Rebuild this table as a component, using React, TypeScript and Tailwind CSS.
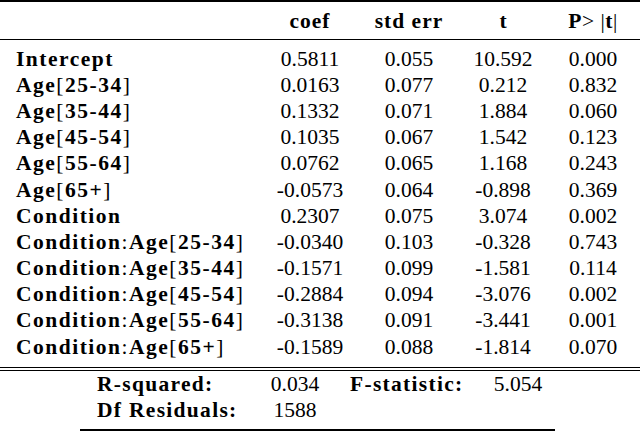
const rows: [string, string | null, string, string, string, string][] = [
  ["Intercept", null, "0.5811", "0.055", "10.592", "0.000"],
  ["Age", "25-34", "0.0163", "0.077", "0.212", "0.832"],
  ["Age", "35-44", "0.1332", "0.071", "1.884", "0.060"],
  ["Age", "45-54", "0.1035", "0.067", "1.542", "0.123"],
  ["Age", "55-64", "0.0762", "0.065", "1.168", "0.243"],
  ["Age", "65+", "-0.0573", "0.064", "-0.898", "0.369"],
  ["Condition", null, "0.2307", "0.075", "3.074", "0.002"],
  ["Condition:Age", "25-34", "-0.0340", "0.103", "-0.328", "0.743"],
  ["Condition:Age", "35-44", "-0.1571", "0.099", "-1.581", "0.114"],
  ["Condition:Age", "45-54", "-0.2884", "0.094", "-3.076", "0.002"],
  ["Condition:Age", "55-64", "-0.3138", "0.091", "-3.441", "0.001"],
  ["Condition:Age", "65+", "-0.1589", "0.088", "-1.814", "0.070"],
];

const cols = "grid grid-cols-[262px_96px_102px_86px_94px]";

function Label({ base, range }: { base: string; range: string | null }) {
  const parts = base.split(":");
  return (
    <span className="tracking-[1.5px]">
      {parts.map((p, i) => (
        <span key={i}>
          {i > 0 && <span className="font-normal">:</span>}
          <span className="font-bold">{p}</span>
        </span>
      ))}
      {range && (
        <>
          <span className="font-normal">[</span>
          <span className="font-bold">{range}</span>
          <span className="font-normal">]</span>
        </>
      )}
    </span>
  );
}

export default function App() {
  return (
    <div className="font-serif">
      <div className="w-[640px] h-[433px] overflow-hidden bg-white text-black font-[family-name:Liberation_Serif] text-[21.5px] leading-[26.2px]">
        {/* top rule */}
        <div className="h-[2px] bg-black" />

        {/* header */}
        <div className={`${cols} h-[37px] pt-[5.6px] text-center font-bold`}>
          <div />
          <div className="tracking-[1px]">coef</div>
          <div className="tracking-[1px]">std err</div>
          <div>t</div>
          <div className="tracking-[0.5px]">
            P<span className="font-normal">&gt; |</span>t<span className="font-normal">|</span>
          </div>
        </div>

        {/* mid rule */}
        <div className="h-[1px] bg-black" />

        {/* body */}
        <div className="pt-[5.6px]">
          {rows.map(([base, range, coef, se, t, p], i) => (
            <div key={i} className={`${cols} h-[26.2px] text-center`}>
              <div className="pl-[16px] text-left whitespace-nowrap">
                <Label base={base} range={range} />
              </div>
              <div>{coef}</div>
              <div>{se}</div>
              <div>{t}</div>
              <div>{p}</div>
            </div>
          ))}
        </div>

        {/* double rule */}
        <div className="mt-[7px] flex flex-col gap-[2px]">
          <div className="h-[1px] bg-black" />
          <div className="h-[1px] bg-black" />
        </div>

        {/* summary */}
        <div className="ml-[80px] w-[475px] leading-[25.8px]">
          <div className="mt-[1px] pl-[17px] grid grid-cols-[165px_66px_162px_56px]">
            <div className="font-bold tracking-[1.3px] whitespace-nowrap">R-squared:</div>
            <div className="text-center">0.034</div>
            <div className="pl-[22px] font-bold tracking-[1.3px] whitespace-nowrap">F-statistic:</div>
            <div className="text-center">5.054</div>
            <div className="font-bold tracking-[1.3px] whitespace-nowrap">Df Residuals:</div>
            <div className="text-center">1588</div>
            <div />
            <div />
          </div>
          <div className="mt-[6px] h-[2px] bg-black" />
        </div>
      </div>
    </div>
  );
}
